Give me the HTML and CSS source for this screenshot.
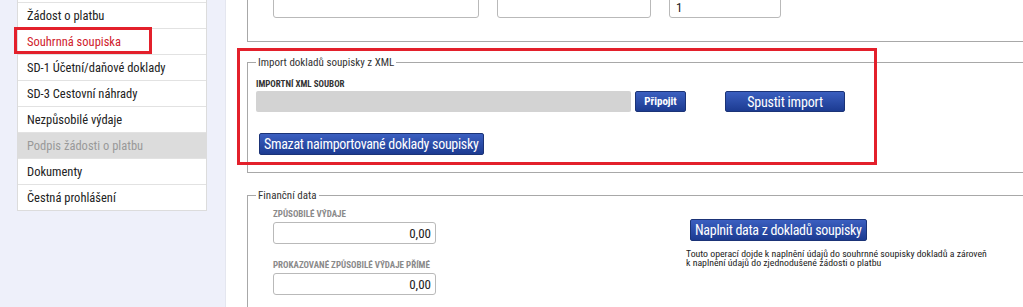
FILE: index.html
```html
<!DOCTYPE html>
<html lang="cs">
<head>
  <meta charset="UTF-8" />
  <title>Souhrnná soupiska</title>
  <link rel="stylesheet" href="styles.css">
</head>
<body>
  <aside class="menu">
    <ul>
      <li>Žádost o platbu</li>
      <li class="aktivni">Souhrnná soupiska</li>
      <li>SD-1 Účetní/daňové doklady</li>
      <li>SD-3 Cestovní náhrady</li>
      <li>Nezpůsobilé výdaje</li>
      <li class="zakazano">Podpis žádosti o platbu</li>
      <li>Dokumenty</li>
      <li>Čestná prohlášení</li>
    </ul>
    <div class="zvyrazneni menu-zvyrazneni"></div>
  </aside>

  <main>
    <div class="horni-blok">
      <input type="text" class="pole pole-1" />
      <input type="text" class="pole pole-2" />
      <input type="text" class="pole pole-3" value="1" />
    </div>

    <div class="import-obal">
      <fieldset class="sekce sekce-import">
        <legend>Import dokladů soupisky z XML</legend>
        <label class="popis">IMPORTNÍ XML SOUBOR</label>
        <div class="radek-import">
          <div class="soubor"></div>
          <button class="tlacitko maly">Připojit</button>
          <button class="tlacitko spustit">Spustit import</button>
        </div>
        <button class="tlacitko velky smazat">Smazat naimportované doklady soupisky</button>
      </fieldset>
      <div class="zvyrazneni import-zvyrazneni"></div>
    </div>

    <fieldset class="sekce sekce-financni">
      <legend>Finanční data</legend>
      <div class="financni-obsah">
        <div class="sloupec-pole">
          <label class="popis sedy">ZPŮSOBILÉ VÝDAJE</label>
          <input type="text" class="pole castka" value="0,00" />
          <label class="popis sedy">PROKAZOVANÉ ZPŮSOBILÉ VÝDAJE PŘÍMÉ</label>
          <input type="text" class="pole castka" value="0,00" />
        </div>
        <div class="sloupec-akce">
          <button class="tlacitko velky">Naplnit data z dokladů soupisky</button>
          <p class="poznamka">Touto operací dojde k naplnění údajů do souhrnné soupisky dokladů a zároveň<br>k naplnění údajů do zjednodušené žádosti o platbu</p>
        </div>
      </div>
    </fieldset>
  </main>
</body>
</html>
```

FILE: styles.css
```css
:root {
  --pozadi: #eef0fa;
  --text: #222;
  --cervena: #e3202b;
  --ramecek: #a8a8a8;
  --modra-horni: #3b5fc0;
  --modra-dolni: #1c3b91;
}

body {
  margin: 0;
  height: 307px;
  overflow: hidden;
  display: flex;
  background-color: var(--pozadi);
  font-family: "Roboto Condensed", "DejaVu Sans Condensed", "Liberation Sans Narrow", Roboto, sans-serif;
  font-stretch: condensed;
  color: var(--text);
}

/* levé menu */
.menu {
  position: relative;
  width: 190px;
  margin-left: 17px;
  align-self: flex-start;
}

.menu ul {
  list-style: none;
  margin: 0;
  padding: 2px 0 0;
  background: #fff;
  border: 1px solid #dcdcdc;
  border-top: none;
}

.menu li {
  height: 25px;
  line-height: 25px;
  padding-left: 9px;
  font-size: 12.5px;
  border-top: 1px solid #e2e2e2;
}

.menu li.aktivni {
  color: #d0212b;
}

.menu li.zakazano {
  background: #dcdcdc;
  color: #999;
}

.zvyrazneni {
  position: absolute;
  border: 3px solid var(--cervena);
  pointer-events: none;
}

.menu-zvyrazneni {
  left: -3px;
  top: 27px;
  width: 132px;
  height: 21px;
}

/* hlavní část */
main {
  flex: 1;
  margin-left: 18px;
  background: #fff;
  border-left: 1px solid #e4e6ef;
}

.horni-blok {
  margin: -20px 0 0 21px;
  padding: 16px 0 0 25px;
  box-sizing: border-box;
  border-left: 1px solid var(--ramecek);
  border-bottom: 1px solid var(--ramecek);
  display: flex;
  gap: 18px;
  height: 62px;
}

.pole {
  height: 22px;
  box-sizing: border-box;
  border: 1px solid #b9b9b9;
  border-radius: 3px;
  font-family: inherit;
  font-size: 13px;
  padding: 0 6px;
  color: var(--text);
}

.pole-1 { width: 206px; }
.pole-2 { width: 154px; }
.pole-3 { width: 112px; }

.import-obal {
  position: relative;
  margin-top: 14px;
}

.import-zvyrazneni {
  left: 11px;
  top: -8px;
  width: 634px;
  height: 111px;
}

.sekce {
  margin: 0 0 0 21px;
  padding: 0 0 0 8px;
  border: 1px solid var(--ramecek);
  border-right: none;
  min-width: 0;
}

.sekce legend {
  font-size: 11px;
  line-height: 13px;
  padding: 0 2px;
  color: #333;
}

.sekce-import {
  height: 117px;
  box-sizing: border-box;
}

.popis {
  display: block;
  font-size: 9px;
  font-weight: bold;
  line-height: 11px;
  margin-top: 10px;
  color: #333;
}

.popis.sedy {
  color: #8a8a8a;
}

.radek-import {
  display: flex;
  margin-top: 1px;
}

.soubor {
  width: 375px;
  height: 21px;
  background: #d3d3d3;
  border-radius: 2px;
}

.tlacitko {
  font-family: inherit;
  font-stretch: condensed;
  color: #fff;
  border: 1px solid #1b3377;
  border-radius: 2px;
  background: linear-gradient(to bottom, var(--modra-horni), var(--modra-dolni));
  cursor: pointer;
  padding: 0;
}

.maly {
  width: 51px;
  height: 21px;
  margin-left: 4px;
  font-size: 11px;
  font-weight: bold;
}

.spustit {
  width: 120px;
  height: 21px;
  margin-left: 39px;
  font-size: 14px;
  letter-spacing: -0.2px;
}

.velky {
  height: 22px;
  font-size: 14px;
  letter-spacing: -0.3px;
  padding: 0 4px;
}

.smazat {
  margin: 21px 0 0 3px;
}

.sekce-financni {
  margin-top: 16px;
  padding-bottom: 20px;
}

.financni-obsah {
  display: flex;
  padding-left: 17px;
}

.sloupec-pole {
  width: 163px;
}

.sloupec-pole .popis {
  margin-top: 7px;
}

.sloupec-pole .popis + .pole {
  margin-top: 2px;
}

.castka {
  width: 163px;
  text-align: right;
  padding-right: 4px;
  margin-bottom: 9px;
}

.sloupec-akce {
  margin-left: 250px;
  padding-top: 17px;
}

.sloupec-akce .velky {
  margin-left: 4px;
}

.poznamka {
  margin: 8px 0 0;
  font-size: 9.8px;
  line-height: 9px;
  white-space: nowrap;
  color: #222;
}
```
